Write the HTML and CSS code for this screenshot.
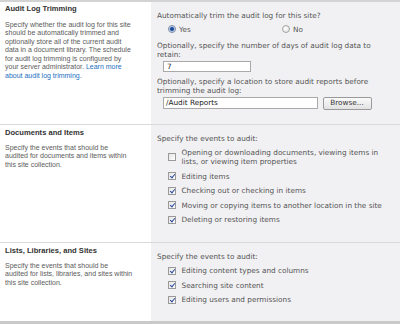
FILE: index.html
```html
<!DOCTYPE html>
<html>
<head>
<meta charset="utf-8">
<link rel="stylesheet" href="styles.css">
</head>
<body>
<div class="form">
  <section class="sec sec-trim">
    <div class="desc">
      <h3 class="title">Audit Log Trimming</h3>
      <p class="text">Specify whether the audit log for this site<br>should be automatically trimmed and<br>optionally store all of the current audit<br>data in a document library. The schedule<br>for audit log trimming is configured by<br>your server administrator. <a class="link" href="#">Learn more<br>about audit log trimming.</a></p>
    </div>
    <div class="ctrl">
      <div class="line">Automatically trim the audit log for this site?</div>
      <div class="radios">
        <span class="opt opt-yes"><span class="radio on"></span>Yes</span>
        <span class="opt"><span class="radio"></span>No</span>
      </div>
      <div class="line gap7">Optionally, specify the number of days of audit log data to retain:</div>
      <div class="field field-days">7</div>
      <div class="line gap5">Optionally, specify a location to store audit reports before trimming the audit log:</div>
      <div class="browse-row">
        <div class="field field-loc">/Audit Reports</div>
        <span class="btn">Browse...</span>
      </div>
    </div>
  </section>

  <section class="sec sec-docs">
    <div class="desc">
      <h3 class="title">Documents and Items</h3>
      <p class="text">Specify the events that should be<br>audited for documents and items within<br>this site collection.</p>
    </div>
    <div class="ctrl">
      <div class="line">Specify the events to audit:</div>
      <ul class="checks">
        <li class="check"><span class="box"></span><span class="lbl">Opening or downloading documents, viewing items in lists, or viewing item properties</span></li>
        <li class="check"><span class="box on"></span><span class="lbl">Editing items</span></li>
        <li class="check"><span class="box on"></span><span class="lbl">Checking out or checking in items</span></li>
        <li class="check"><span class="box on"></span><span class="lbl">Moving or copying items to another location in the site</span></li>
        <li class="check"><span class="box on"></span><span class="lbl">Deleting or restoring items</span></li>
      </ul>
    </div>
  </section>

  <section class="sec sec-lists">
    <div class="desc">
      <h3 class="title">Lists, Libraries, and Sites</h3>
      <p class="text">Specify the events that should be<br>audited for lists, libraries, and sites within<br>this site collection.</p>
    </div>
    <div class="ctrl">
      <div class="line">Specify the events to audit:</div>
      <ul class="checks">
        <li class="check"><span class="box on"></span><span class="lbl">Editing content types and columns</span></li>
        <li class="check"><span class="box on"></span><span class="lbl">Searching site content</span></li>
        <li class="check"><span class="box on"></span><span class="lbl">Editing users and permissions</span></li>
      </ul>
    </div>
  </section>
</div>
</body>
</html>
```

FILE: styles.css
```css
html, body {
  margin: 0;
  padding: 0;
  background: #ffffff;
}

.form {
  width: 400px;
  border-top: 2px solid #d3d3d3;
  border-bottom: 3px solid #c9c9c9;
}

.sec {
  display: flex;
  border-bottom: 1px solid #dadada;
}
.sec-lists { border-bottom: none; }

.sec-trim { min-height: 122px; }
.sec-docs { min-height: 117px; }
.sec-lists { min-height: 78px; }

.desc {
  width: 151px;
  box-sizing: border-box;
  padding: 3px 2px 0 5px;
  font-family: "Liberation Sans", Arial, sans-serif;
}
.sec-trim .desc { padding-top: 1.5px; }

.title {
  margin: 0 0 6.5px 0;
  font-size: 7.6px;
  line-height: 9px;
  font-weight: bold;
  color: #333333;
}
.sec-trim .title { margin-bottom: 8px; }

.text {
  margin: 0;
  font-size: 7px;
  line-height: 8.5px;
  color: #5b5b5b;
}

.link {
  color: #1a6fc0;
  text-decoration: none;
}

.ctrl {
  flex: 1;
  background: #f1f1f3;
  padding: 8.5px 6px 0 6px;
  font-family: "DejaVu Sans", Verdana, sans-serif;
  font-size: 7.3px;
  line-height: 9px;
  color: #555555;
}

.line { margin: 0; }
.gap7 { margin-top: 7px; }
.gap5 { margin-top: 4.5px; }

.radios {
  display: flex;
  margin-top: 5px;
  padding-left: 10.5px;
}
.opt {
  display: flex;
  align-items: center;
  gap: 3.5px;
}
.opt-yes { width: 114px; }

.radio {
  width: 6px;
  height: 6px;
  border-radius: 50%;
  border: 1px solid #a3a3a3;
  background: radial-gradient(circle at 40% 40%, #ffffff, #dcdcdc);
}
.radio.on {
  border-color: #7a8aa0;
  background: radial-gradient(circle, #1d3f7a 0, #2b5aa8 1.6px, #9fc0e8 2.4px, #e9f0f8 3px);
}

.field {
  box-sizing: border-box;
  height: 11px;
  margin-left: 6px;
  margin-top: 2.5px;
  padding: 0 3px;
  border: 1px solid #a9a9a9;
  background: #ffffff;
  color: #222222;
  line-height: 9px;
}
.field-days { width: 88px; }

.browse-row {
  display: flex;
  align-items: center;
  margin-top: 2.5px;
}
.browse-row .field {
  margin-top: 0;
  height: 12px;
  line-height: 10px;
}
.field-loc {
  width: 155px;
  padding-left: 2px;
}

.btn {
  box-sizing: border-box;
  width: 49px;
  height: 12.5px;
  margin-left: 4.5px;
  border: 1px solid #9a9a9a;
  border-radius: 2px;
  background: linear-gradient(#fafafa, #e2e2e2);
  color: #333333;
  text-align: center;
  line-height: 10.5px;
}

.checks {
  list-style: none;
  margin: 5.5px 0 0 0;
  padding: 0 0 0 11px;
  display: flex;
  flex-direction: column;
  gap: 5.5px;
}
.check {
  display: flex;
  align-items: center;
}
.lbl { flex: 1; }

.box {
  flex: none;
  box-sizing: border-box;
  width: 8px;
  height: 8px;
  margin-right: 5.5px;
  border: 1px solid #9a9a9a;
  background: linear-gradient(135deg, #e4e4e4, #ffffff);
  position: relative;
}
.box.on::after {
  content: "";
  position: absolute;
  left: 1.6px;
  top: 0.2px;
  width: 2px;
  height: 4px;
  border-right: 1.3px solid #2c4a9a;
  border-bottom: 1.3px solid #2c4a9a;
  transform: rotate(40deg);
}
```
